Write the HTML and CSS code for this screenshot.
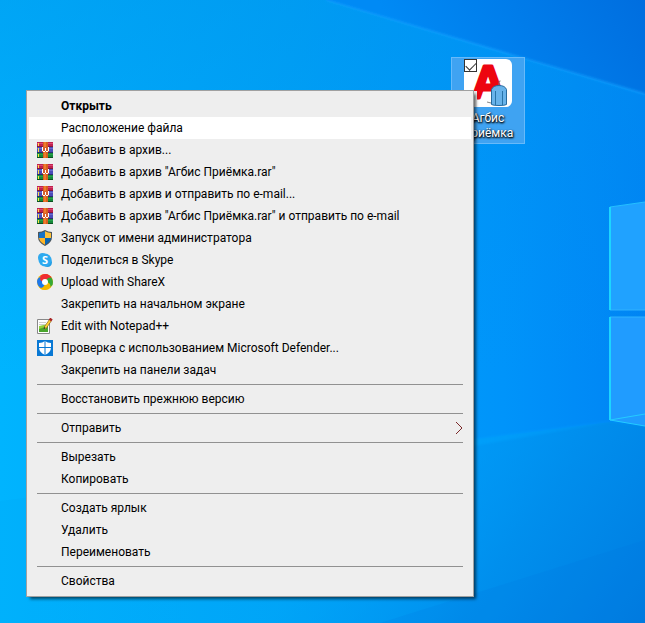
FILE: index.html
```html
<!DOCTYPE html>
<html lang="ru">
<head>
<meta charset="utf-8">
<title>Рабочий стол</title>
<link rel="stylesheet" href="styles.css">
</head>
<body>
<main class="desktop">
  <svg class="wallpaper" viewBox="0 0 645 623" preserveAspectRatio="none" aria-hidden="true">
    <defs>
      <linearGradient id="base" x1="0" y1="0" x2="1" y2="0">
        <stop offset="0" stop-color="#00b4fe"/><stop offset=".45" stop-color="#00a4f8"/><stop offset=".78" stop-color="#0094fa"/><stop offset="1" stop-color="#0084f4"/>
      </linearGradient>
      <linearGradient id="top" x1="0" y1="0" x2="0" y2="1">
        <stop offset="0" stop-color="#008fe8" stop-opacity=".4"/><stop offset=".6" stop-color="#0090f0" stop-opacity="0"/>
      </linearGradient>
      <linearGradient id="corner" gradientUnits="userSpaceOnUse" x1="645" y1="0" x2="450" y2="120">
        <stop offset="0" stop-color="#006edf"/><stop offset="1" stop-color="#008af5"/>
      </linearGradient>
      <linearGradient id="fade" gradientUnits="userSpaceOnUse" x1="400" y1="440" x2="645" y2="623">
        <stop offset="0" stop-color="#00a4f4" stop-opacity=".2"/><stop offset=".5" stop-color="#008eea" stop-opacity=".8"/><stop offset="1" stop-color="#007ce0"/>
      </linearGradient>
      <linearGradient id="beam" gradientUnits="userSpaceOnUse" x1="474" y1="0" x2="645" y2="0">
        <stop offset="0" stop-color="#00a6ff" stop-opacity=".5"/><stop offset="1" stop-color="#009bff" stop-opacity=".3"/>
      </linearGradient>
      <filter id="soft" x="-20%" y="-20%" width="140%" height="140%"><feGaussianBlur stdDeviation="1"/></filter>
    </defs>
    <rect width="645" height="623" fill="url(#base)"/>
    <rect width="645" height="623" fill="url(#top)"/>
    <path d="M326 0H645V94Z" fill="url(#corner)"/>
    <path d="M326 0L645 94" stroke="#12a0ff" stroke-width="2" opacity=".7" filter="url(#soft)"/>
    <path d="M0 501L610 422L645 426V623H0Z" fill="url(#fade)"/>
    <path d="M380 623L645 540V623Z" fill="#0072dc" opacity=".15"/>
    <path d="M450 442L610 421L645 414V426L610 422L450 450Z" fill="url(#beam)" filter="url(#soft)"/>
    <path d="M610 207L645 202V310H610Z" fill="#20a2ff"/>
    <path d="M610 317H645V426L610 420Z" fill="#209cff"/>
    <path d="M610 310V207L645 202" fill="none" stroke="#24bfff"/>
    <path d="M610 310H645M610 317H645" stroke="#2eb2ff"/>
    <path d="M610 207V310M610 317V420" stroke="#1cd5ff" stroke-width="2"/>
    <path d="M610 420L645 414M610 420L645 426" stroke="#24ccff" fill="none"/>
  </svg>

  <div class="shortcut">
    <div class="shortcut-picture">
      <svg viewBox="0 0 48 48" aria-hidden="true">
        <rect width="48" height="48" rx="6" fill="#fff"/>
        <text class="logo-letter" x="24" y="39">А</text>
        <path d="M35 26v-2.500q0-2 1.500-1.500" fill="none" stroke="#777"/>
        <path d="M35 26.500q6 0 7.500 4v15q-1.500 1-7.500 1t-7.500-1v-15q1.500-4 7.500-4Z" fill="#68b3ea" stroke="#276b9e"/>
        <path d="M31.500 32v14M38.500 32v14" stroke="#2874a8" fill="none"/>
        <path d="M23 43l4 1" stroke="#888"/>
        <rect y="32" width="13" height="16" fill="#eee"/>
      </svg>
      <input class="shortcut-check" type="checkbox" id="pick" checked>
    </div>
    <label class="shortcut-label" for="pick">Агбис Приёмка</label>
  </div>

  <svg class="symbols" aria-hidden="true">
    <symbol id="rar" viewBox="0 0 16 16">
      <path d="M0 0h16v5H0z" fill="#c0204f"/><path d="M0 1h16v1H0z" fill="#dc4872"/><path d="M0 4h16v1H0z" fill="#85163a"/>
      <path d="M0 5h16v5H0z" fill="#4a4bb8"/><path d="M0 6h16v1H0z" fill="#6a6ccc"/><path d="M0 10h16v1H0z" fill="#2a2b70"/>
      <path d="M0 11h16v5H0z" fill="#168a3a"/><path d="M0 12h16v1H0z" fill="#28a04a"/><path d="M0 15h16v1H0z" fill="#0b5020"/>
      <path d="M1 1h1v3H1zM1 6h1v4H1zM1 12h1v3H1z" fill="#ffe145"/>
      <path d="M6 0h5v16H6z" fill="#d8601d"/><path d="M7 0h2v16H7z" fill="#f07a2c"/>
      <path d="M5 5h7v5H5z" fill="#d6602c"/>
      <path d="M5 5h1v4h2v1H6V9H5zM11 5h1v4h-1v1H9V9h2z" fill="#fff"/><path d="M8 6h1v3H8z" fill="#fff"/>
    </symbol>
    <symbol id="admin" viewBox="0 0 16 16">
      <path d="M8 0Q5 2 1 2V7q0 5.500 7 9Q15 12.500 15 7V2Q11 2 8 0Z" fill="#4c555c"/>
      <path d="M8 1.200Q5 3 2 3V8h6Z" fill="#1673c7"/><path d="M8 1.200q3 1.800 6 1.800V8H8Z" fill="#ffc239"/>
      <path d="M2 8h6v6.800Q2.700 12 2 8Z" fill="#ffb526"/><path d="M14 8H8v6.800Q13.300 12 14 8Z" fill="#0864b4"/>
    </symbol>
    <symbol id="sharex" viewBox="0 0 16 16">
      <circle cx="8" cy="8" r="8" fill="#f5b800"/>
      <path d="M8 8L3 2Q5.500 0 8.500 0Q13 .5 15 4.500Q11 2.500 8 8Z" fill="#f02d31"/>
      <path d="M8 8Q8 3 12 2.500Q14 3 15 4.500Q16.500 8 15.500 11Q14 13 12 13Q14.500 9 8 8Z" fill="#35a936"/>
      <path d="M8 8Q13 8 13.500 12Q12 15.500 8 16Q4 16 2 13Q6 14 8 8Z" fill="#f5b800"/>
      <path d="M8 8Q8 13 4 14Q0 12 0 7Q1 3 4 3Q2 7 8 8Z" fill="#1c78ed"/>
      <path d="M8 8Q3 8 3 4Q5 0 9 0Q13 1 14 3.500Q10 3 8 8Z" fill="#f02d31"/>
      <circle cx="8" cy="8" r="3" fill="#fff"/>
    </symbol>
    <symbol id="notepad" viewBox="0 0 16 16">
      <path d="M.5 1.500h12v14H.5z" fill="#fff" stroke="#888"/>
      <path d="M2 8l9-2v8H2z" fill="#8fd13c"/><path d="M2 11l9-3v6H2z" fill="#4aa52d"/>
      <path d="M2 4.500h7M2 6.500h6" stroke="#ccc"/>
      <path d="M8 10L13.500 2" stroke="#7b5610" stroke-width="3"/><path d="M8 10L13.500 2" stroke="#ffcf39" stroke-width="2"/>
      <path d="M13 2.500L14.500 .5" stroke="#a82525" stroke-width="3"/><path d="M7 11l1-2" stroke="#333"/>
    </symbol>
    <symbol id="defender" viewBox="0 0 16 16">
      <path d="M0 0h16v16H0z" fill="#0878d4"/>
      <path d="M8 1Q5.500 3 2 3v4.500Q2 12 8 15q6-3 6-7.500V3Q10.500 3 8 1Z" fill="#fff"/>
      <path d="M8 1v14M2 7.500h12" stroke="#0878d4"/>
    </symbol>
  </svg>

  <div class="menu" role="menu">
    <button class="item item-default" role="menuitem"><span class="icon"></span>Открыть</button>
    <button class="item item-active" role="menuitem"><span class="icon"></span>Расположение файла</button>
    <button class="item" role="menuitem"><svg class="icon"><use href="#rar"/></svg>Добавить в архив...</button>
    <button class="item" role="menuitem"><svg class="icon"><use href="#rar"/></svg>Добавить в архив "Агбис Приёмка.rar"</button>
    <button class="item" role="menuitem"><svg class="icon"><use href="#rar"/></svg>Добавить в архив и отправить по e-mail...</button>
    <button class="item" role="menuitem"><svg class="icon"><use href="#rar"/></svg>Добавить в архив "Агбис Приёмка.rar" и отправить по e-mail</button>
    <button class="item" role="menuitem"><svg class="icon"><use href="#admin"/></svg>Запуск от имени администратора</button>
    <button class="item" role="menuitem"><svg class="icon" viewBox="0 0 16 16"><circle cx="5.500" cy="5.500" r="4.500" fill="#33a9ec"/><circle cx="10.500" cy="10.500" r="4.500" fill="#249de3"/><circle cx="8" cy="8" r="6.500" fill="#2daaf0"/><text class="skype-letter" x="8" y="12">S</text></svg>Поделиться в Skype</button>
    <button class="item" role="menuitem"><svg class="icon"><use href="#sharex"/></svg>Upload with ShareX</button>
    <button class="item" role="menuitem"><span class="icon"></span>Закрепить на начальном экране</button>
    <button class="item" role="menuitem"><svg class="icon"><use href="#notepad"/></svg>Edit with Notepad++</button>
    <button class="item" role="menuitem"><svg class="icon"><use href="#defender"/></svg>Проверка с использованием Microsoft Defender...</button>
    <button class="item" role="menuitem"><span class="icon"></span>Закрепить на панели задач</button>
    <hr class="separator">
    <button class="item" role="menuitem"><span class="icon"></span>Восстановить прежнюю версию</button>
    <hr class="separator">
    <button class="item" role="menuitem" aria-haspopup="menu"><span class="icon"></span>Отправить<svg class="arrow" viewBox="0 0 8 14"><path d="M1 1l6 6-6 6" fill="none" stroke="#7a2a2a"/></svg></button>
    <hr class="separator">
    <button class="item" role="menuitem"><span class="icon"></span>Вырезать</button>
    <button class="item" role="menuitem"><span class="icon"></span>Копировать</button>
    <hr class="separator">
    <button class="item" role="menuitem"><span class="icon"></span>Создать ярлык</button>
    <button class="item" role="menuitem"><span class="icon"></span>Удалить</button>
    <button class="item" role="menuitem"><span class="icon"></span>Переименовать</button>
    <hr class="separator">
    <button class="item" role="menuitem"><span class="icon"></span>Свойства</button>
  </div>
</main>
</body>
</html>
```
FILE: styles.css
```css
* {
  box-sizing: border-box;
}

body {
  margin: 0;
  font: 12px/16px Roboto, "Open Sans", sans-serif;
}

.desktop {
  position: relative;
  min-height: 100vh;
  overflow: hidden;
  background: #009df8;
}

.wallpaper {
  position: absolute;
  inset: 0;
  width: 100%;
  height: 100%;
}

.symbols {
  position: absolute;
  width: 0;
  height: 0;
}

.shortcut {
  position: absolute;
  top: 57px;
  right: 120px;
  display: flex;
  flex-direction: column;
  align-items: center;
  gap: 4px;
  width: 74px;
  padding: 1px 0 2px;
  border: 1px solid #67bafa;
  background: #3fa3f2;
}

.shortcut-picture {
  position: relative;
  width: 48px;
  height: 48px;
}

.shortcut-picture svg {
  display: block;
  width: 100%;
  height: 100%;
}

.logo-letter {
  fill: #ed0510;
  stroke: #ed0510;
  stroke-width: 3px;
  stroke-linejoin: round;
  font: bold 46px "Liberation Sans", sans-serif;
  text-anchor: middle;
}

.shortcut-check {
  position: absolute;
  top: 0;
  left: 0;
  width: 13px;
  height: 13px;
  margin: 0;
  appearance: none;
  border: 1px solid #333;
  background: #fff;
}

.shortcut-check:checked::after {
  content: "";
  display: block;
  width: 9px;
  height: 5px;
  margin: 2px 1px;
  border: solid #333;
  border-width: 0 0 1px 1px;
  transform: rotate(-45deg);
}

.shortcut-label {
  width: 60px;
  color: #fff;
  line-height: 15px;
  text-align: center;
  text-shadow: 0 1px 2px #000, 1px 1px 2px #000;
}

.menu {
  position: absolute;
  top: 90px;
  left: 26px;
  right: 171px;
  padding: 4px 2px;
  border: 1px solid #a0a0a0;
  background: #eee;
  box-shadow: 3px 3px 3px -1px rgb(0 0 0 / 60%);
}

.item {
  display: flex;
  align-items: center;
  gap: 8px;
  width: 100%;
  height: 22px;
  padding: 0 8px;
  border: 0;
  background: none;
  color: #000;
  font: inherit;
  text-align: left;
  white-space: nowrap;
}

.item-default {
  font-weight: bold;
}

.item-active {
  background: #fff;
}

.icon {
  flex: none;
  width: 16px;
  height: 16px;
}

.skype-letter {
  fill: #fff;
  font: bold 11px "Open Sans", sans-serif;
  text-anchor: middle;
}

.arrow {
  width: 8px;
  height: 14px;
  margin-left: auto;
}

.separator {
  height: 1px;
  margin: 3px 8px;
  border: 0;
  background: #919191;
}
```
